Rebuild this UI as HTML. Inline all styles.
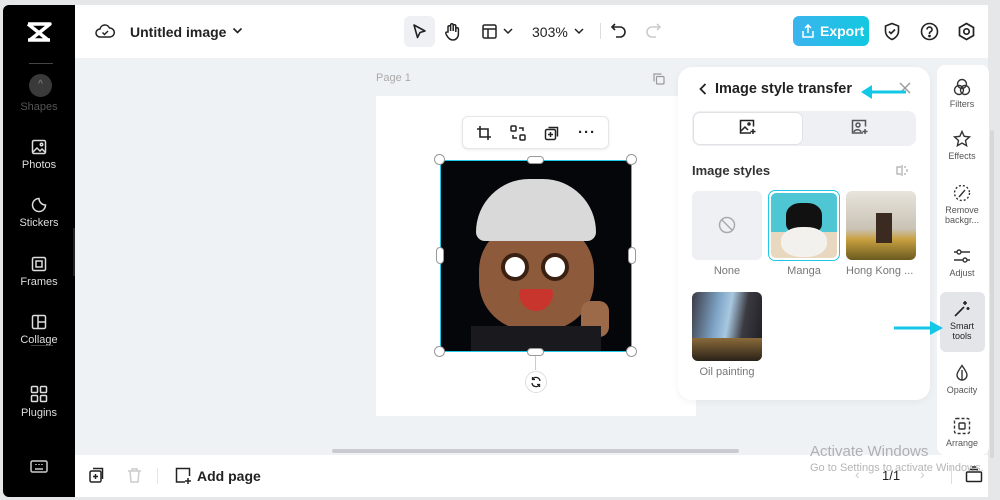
<!DOCTYPE html>
<html><head><meta charset="utf-8"><style>
*{box-sizing:border-box;margin:0;padding:0}
body{width:1000px;height:500px;background:#e6e7e9;font-family:"Liberation Sans",sans-serif;position:relative;overflow:hidden}
.a{position:absolute}
.side{left:3px;top:5px;width:72px;height:492px;background:#000;border-radius:6px 0 0 6px}
.si{position:absolute;left:0;width:72px;text-align:center;color:#ddd;font-size:11px}
.si svg{display:block;margin:0 auto 4px}
.rl{position:absolute;left:937px;width:50px;text-align:center;font-size:9px;color:#555;line-height:10px}
.rl svg{display:block;margin:0 auto 3px}
</style></head><body>
<div class="a side">
 <div class="a" style="left:23px;top:16px;width:26px;height:22px">
  <svg width="26" height="22" viewBox="0 0 26 22"><path d="M2 3h22L4 19h20M2 19h6M18 3h6M2 3l20 16" stroke="#fff" stroke-width="3.5" fill="none" stroke-linejoin="round"/></svg></div>
 <div class="a" style="left:26px;top:58px;width:24px;height:1px;background:#444"></div>
 <div class="a" style="left:26px;top:69px;width:23px;height:23px;border-radius:50%;background:#3a3a3a;color:#888;font-size:10px;text-align:center;line-height:22px">^</div>
 <div class="si" style="top:96px;color:#555">Shapes</div>
 <div class="si" style="top:134px"><svg width="16" height="16" viewBox="0 0 16 16" fill="none" stroke="#ddd" stroke-width="1.5"><rect x="1.5" y="1.5" width="13" height="13" rx="1.5"/><path d="M2 13l4-4 3 3 2-2 3 3"/><circle cx="10.5" cy="5.5" r="1.2"/></svg>Photos</div>
 <div class="si" style="top:192px"><svg width="16" height="16" viewBox="0 0 16 16" fill="none" stroke="#ddd" stroke-width="1.5"><path d="M14.5 8A6.5 6.5 0 1 1 8 1.5c0 3.5 3 6.5 6.5 6.5z"/></svg>Stickers</div>
 <div class="si" style="top:251px"><svg width="16" height="16" viewBox="0 0 16 16" fill="none" stroke="#ddd" stroke-width="1.5"><rect x="1.5" y="1.5" width="13" height="13" rx="1.5"/><rect x="5" y="5" width="6" height="6"/></svg>Frames</div>
 <div class="si" style="top:309px"><svg width="16" height="16" viewBox="0 0 16 16" fill="none" stroke="#ddd" stroke-width="1.5"><rect x="1.5" y="1.5" width="13" height="13" rx="1.5"/><path d="M7 1.5v13M7 8h7.5"/></svg>Collage</div>
 <div class="a" style="left:28px;top:340px;width:22px;height:1px;background:#444"></div>
 <div class="si" style="top:380px"><svg width="18" height="18" viewBox="0 0 18 18" fill="none" stroke="#ddd" stroke-width="1.5"><rect x="1.5" y="1.5" width="6" height="6" rx="1"/><rect x="10.5" y="1.5" width="6" height="6" rx="1"/><rect x="1.5" y="10.5" width="6" height="6" rx="1"/><rect x="10.5" y="10.5" width="6" height="6" rx="1"/></svg>Plugins</div>
 <div class="si" style="top:455px"><svg width="18" height="14" viewBox="0 0 18 14" fill="none" stroke="#ccc" stroke-width="1.5"><rect x="1" y="1" width="16" height="11" rx="1.5"/><path d="M5 9h8M6 4v1M9 4v1M12 4v1"/></svg></div>
</div>
<div class="a" style="left:73px;top:228px;width:8px;height:48px;background:#222;border-radius:0 6px 6px 0"></div>
<!-- top bar -->
<div class="a" style="left:75px;top:5px;width:913px;height:53px;background:#fff"></div>
<svg class="a" style="left:95px;top:22px" width="20" height="18" viewBox="0 0 20 18" fill="none" stroke="#222" stroke-width="1.5"><path d="M5 15a4 4 0 0 1 0-8 5 5 0 0 1 9.5-1A4.5 4.5 0 0 1 15 15z"/><path d="M7.5 10.5l2 2 3.5-3.5"/></svg>
<div class="a" style="left:130px;top:24px;font-size:14px;font-weight:bold;color:#222">Untitled image</div>
<svg class="a" style="left:232px;top:27px" width="11" height="8" viewBox="0 0 11 8"><path d="M1.5 1.5l4 4 4-4" stroke="#222" stroke-width="1.6" fill="none"/></svg>
<div class="a" style="left:404px;top:16px;width:31px;height:31px;background:#eef0f3;border-radius:6px"></div>
<svg class="a" style="left:411px;top:23px" width="17" height="17" viewBox="0 0 17 17"><path d="M3 2l11 6-5 1.5-2.5 5z" stroke="#222" stroke-width="1.6" fill="none" stroke-linejoin="round"/></svg>
<svg class="a" style="left:444px;top:22px" width="17" height="19" viewBox="0 0 17 19" fill="none" stroke="#222" stroke-width="1.5"><path d="M4 10V5a1.3 1.3 0 0 1 2.6 0v4V3a1.3 1.3 0 0 1 2.6 0v6V4a1.3 1.3 0 0 1 2.6 0v6-3a1.3 1.3 0 0 1 2.6 0v5c0 3.5-2.5 6-5.5 6S4 16 2.5 13 2 10 4 10z"/></svg>
<svg class="a" style="left:482px;top:24px" width="15" height="15" viewBox="0 0 15 15" fill="none" stroke="#222" stroke-width="1.5"><rect x="1" y="1" width="13" height="13" rx="1.5"/><path d="M1 5h13M6 5v9"/></svg>
<svg class="a" style="left:503px;top:28px" width="10" height="7" viewBox="0 0 10 7"><path d="M1 1l4 4 4-4" stroke="#222" stroke-width="1.5" fill="none"/></svg>
<div class="a" style="left:532px;top:24px;font-size:14px;color:#222">303%</div>
<svg class="a" style="left:574px;top:28px" width="10" height="7" viewBox="0 0 10 7"><path d="M1 1l4 4 4-4" stroke="#222" stroke-width="1.5" fill="none"/></svg>
<div class="a" style="left:600px;top:23px;width:1px;height:16px;background:#ddd"></div>
<svg class="a" style="left:611px;top:23px" width="16" height="15" viewBox="0 0 16 15" fill="none" stroke="#222" stroke-width="1.6"><path d="M4 1L1 4l3 3M1 4h8a5 5 0 0 1 0 10H5"/></svg>
<svg class="a" style="left:645px;top:23px" width="16" height="15" viewBox="0 0 16 15" fill="none" stroke="#ccc" stroke-width="1.6"><path d="M12 1l3 3-3 3M15 4H7a5 5 0 0 0 0 10h4"/></svg>
<div class="a" style="left:793px;top:16px;width:76px;height:30px;background:linear-gradient(90deg,#3bb4ee,#12c8e0);border-radius:6px;color:#fff;font-size:14px;font-weight:bold;line-height:30px;padding-left:27px">Export</div>
<svg class="a" style="left:801px;top:24px" width="14" height="14" viewBox="0 0 14 14" fill="none" stroke="#fff" stroke-width="1.5"><path d="M7 9V1M4 4l3-3 3 3M2 7v6h10V7"/></svg>
<svg class="a" style="left:883px;top:22px" width="18" height="19" viewBox="0 0 18 19" fill="none" stroke="#222" stroke-width="1.6"><path d="M9 1.5l6.5 2.5v5c0 4-3 7-6.5 8.5C5.5 16 2.5 13 2.5 9V4z"/><path d="M6 9.5l2 2 4-4"/></svg>
<svg class="a" style="left:920px;top:22px" width="19" height="19" viewBox="0 0 19 19" fill="none" stroke="#222" stroke-width="1.6"><circle cx="9.5" cy="9.5" r="8"/><path d="M7 7.5a2.5 2.5 0 1 1 3.5 2.3c-.7.3-1 .8-1 1.5v.7"/><circle cx="9.5" cy="14" r=".6" fill="#222"/></svg>
<svg class="a" style="left:957px;top:22px" width="19" height="19" viewBox="0 0 19 19" fill="none" stroke="#222" stroke-width="1.7"><path d="M9.5 1.5l7 4v8l-7 4-7-4v-8z"/><circle cx="9.5" cy="9.5" r="2.7"/></svg>
<!-- canvas -->
<div class="a" style="left:75px;top:58px;width:913px;height:397px;background:#eff2f5"></div>
<div class="a" style="left:376px;top:72px;font-size:11px;color:#aaa">Page 1</div>
<svg class="a" style="left:653px;top:73px" width="12" height="12" viewBox="0 0 12 12" fill="none" stroke="#999" stroke-width="1.2"><rect x="3.5" y="3.5" width="7.5" height="7.5" rx="1"/><path d="M1 8.5V1h7.5"/></svg>
<div class="a" style="left:376px;top:96px;width:320px;height:320px;background:#fff"></div>
<div class="a" style="left:462px;top:116px;width:147px;height:33px;background:#fff;border:1px solid #e4e6ea;border-radius:6px;box-shadow:0 1px 3px rgba(0,0,0,.08)"></div>
<svg class="a" style="left:476px;top:125px" width="16" height="16" viewBox="0 0 16 16" fill="none" stroke="#222" stroke-width="1.6"><path d="M4 1v11h11M1 4h11v11"/></svg>
<svg class="a" style="left:510px;top:125px" width="16" height="16" viewBox="0 0 16 16" fill="none" stroke="#222" stroke-width="1.5"><rect x="1" y="1" width="5" height="5" rx="1"/><rect x="10" y="10" width="5" height="5" rx="1"/><path d="M9 3h4v3M7 13H3v-3"/></svg>
<svg class="a" style="left:544px;top:125px" width="16" height="16" viewBox="0 0 16 16" fill="none" stroke="#222" stroke-width="1.5"><rect x="1.5" y="4.5" width="10" height="10" rx="1.5"/><path d="M4.5 2.5h9v9M6.5 7v5M4 9.5h5"/></svg>
<div class="a" style="left:578px;top:124px;font-size:15px;font-weight:bold;color:#222;letter-spacing:1px">···</div>
<!-- image -->
<div class="a" style="left:440px;top:160px;width:192px;height:192px;background:#05060a;border:1.5px solid #1ec8e6;overflow:hidden">
 <div class="a" style="left:38px;top:60px;width:115px;height:110px;border-radius:45%;background:#8d5a3c"></div>
 <div class="a" style="left:35px;top:18px;width:120px;height:62px;border-radius:60px 60px 10px 10px;background:#d9d9d9"></div>
 <div class="a" style="left:60px;top:92px;width:28px;height:28px;border-radius:50%;background:#fff;border:4px solid #3a2010"></div>
 <div class="a" style="left:100px;top:92px;width:28px;height:28px;border-radius:50%;background:#fff;border:4px solid #3a2010"></div>
 <div class="a" style="left:78px;top:128px;width:34px;height:22px;border-radius:4px 4px 20px 20px;background:#c8352d"></div>
 <div class="a" style="left:140px;top:140px;width:28px;height:36px;border-radius:10px;background:#9c6a48"></div>
 <div class="a" style="left:30px;top:165px;width:130px;height:30px;background:#1a1a1e"></div>
</div>
<div class="a" style="left:434px;top:154px;width:11px;height:11px;border-radius:50%;background:#fff;border:1px solid #999"></div>
<div class="a" style="left:626px;top:154px;width:11px;height:11px;border-radius:50%;background:#fff;border:1px solid #999"></div>
<div class="a" style="left:434px;top:346px;width:11px;height:11px;border-radius:50%;background:#fff;border:1px solid #999"></div>
<div class="a" style="left:626px;top:346px;width:11px;height:11px;border-radius:50%;background:#fff;border:1px solid #999"></div>
<div class="a" style="left:527px;top:156px;width:17px;height:8px;border-radius:4px;background:#fff;border:1px solid #999"></div>
<div class="a" style="left:527px;top:348px;width:17px;height:8px;border-radius:4px;background:#fff;border:1px solid #999"></div>
<div class="a" style="left:436px;top:247px;width:8px;height:17px;border-radius:4px;background:#fff;border:1px solid #999"></div>
<div class="a" style="left:628px;top:247px;width:8px;height:17px;border-radius:4px;background:#fff;border:1px solid #999"></div>
<div class="a" style="left:535px;top:356px;width:1px;height:14px;background:#ccc"></div>
<div class="a" style="left:525px;top:371px;width:22px;height:22px;border-radius:50%;background:#fff;border:1px solid #ddd"></div>
<svg class="a" style="left:530px;top:376px" width="12" height="12" viewBox="0 0 12 12" fill="none" stroke="#222" stroke-width="1.3"><path d="M10 5a4 4 0 0 0-7.5-1.5M2 7a4 4 0 0 0 7.5 1.5M2.5 1v2.5H5M9.5 11V8.5H7"/></svg>
<div class="a" style="left:332px;top:449px;width:407px;height:4px;border-radius:2px;background:#c8cbcf"></div>
<!-- panel -->
<div class="a" style="left:678px;top:67px;width:252px;height:333px;background:#fff;border-radius:14px;box-shadow:0 2px 8px rgba(0,0,0,.05)"></div>
<svg class="a" style="left:698px;top:82px" width="10" height="14" viewBox="0 0 10 14"><path d="M7.5 2L2.5 7l5 5" stroke="#222" stroke-width="1.8" fill="none"/></svg>
<div class="a" style="left:715px;top:81px;font-size:14.5px;font-weight:bold;color:#222">Image style transfer</div>
<svg class="a" style="left:898px;top:81px" width="14" height="14" viewBox="0 0 14 14"><path d="M2 2l10 10M12 2L2 12" stroke="#999" stroke-width="1.4"/></svg>
<svg class="a" style="left:860px;top:84px" width="48" height="16" viewBox="0 0 48 16"><path d="M10 8h36" stroke="#12c8e6" stroke-width="3"/><path d="M1 8l11-7v14z" fill="#12c8e6"/></svg>
<div class="a" style="left:692px;top:111px;width:224px;height:35px;background:#eef0f3;border-radius:8px"></div>
<div class="a" style="left:693px;top:112px;width:110px;height:33px;background:#fff;border-radius:7px;border:1px solid #e0e2e6"></div>
<svg class="a" style="left:739px;top:119px" width="18" height="16" viewBox="0 0 18 16" fill="none" stroke="#222" stroke-width="1.5"><path d="M12 14H1.5V1.5h13v6"/><path d="M2 12l4-4 3 3"/><circle cx="10" cy="5" r="1"/><path d="M14 10v5M11.5 12.5h5"/></svg>
<svg class="a" style="left:851px;top:119px" width="18" height="16" viewBox="0 0 18 16" fill="none" stroke="#555" stroke-width="1.5"><path d="M12 14H1.5V1.5h13v6"/><circle cx="7" cy="6" r="2"/><path d="M3 13c1-3 6-3 7 0M14 10v5M11.5 12.5h5"/></svg>
<div class="a" style="left:692px;top:163px;font-size:13px;font-weight:bold;color:#333">Image styles</div>
<svg class="a" style="left:895px;top:164px" width="14" height="13" viewBox="0 0 14 13" fill="none" stroke="#aaa" stroke-width="1.2"><path d="M7 1v11M6 3H2v7h4M9 3h2M12 5v3M9 10h2"/></svg>
<div class="a" style="left:692px;top:191px;width:70px;height:69px;background:#eef0f3;border-radius:6px"></div>
<svg class="a" style="left:718px;top:216px" width="18" height="18" viewBox="0 0 18 18" fill="none" stroke="#aaa" stroke-width="1.5"><circle cx="9" cy="9" r="7.5"/><path d="M4 4l10 10"/></svg>
<div class="a" style="left:692px;top:265px;width:70px;text-align:center;font-size:11px;color:#777">None</div>
<div class="a" style="left:768px;top:190px;width:72px;height:71px;border:1.5px solid #1ec8e6;border-radius:7px;padding:2px;background:#fff"><div style="width:100%;height:100%;border-radius:5px;background:linear-gradient(#4fc6d4 0,#4fc6d4 60%,#e8d8c0 60%);position:relative;overflow:hidden"><div class="a" style="left:15px;top:10px;width:36px;height:30px;background:#111;border-radius:40% 40% 30% 30%"></div><div class="a" style="left:10px;top:34px;width:46px;height:30px;background:#f3f1ee;border-radius:45%"></div></div></div>
<div class="a" style="left:768px;top:265px;width:72px;text-align:center;font-size:11px;color:#777">Manga</div>
<div class="a" style="left:846px;top:191px;width:70px;height:69px;border-radius:6px;background:linear-gradient(#e8e4dc 0,#c9c2b5 55%,#c9a040 70%,#6a5a20 100%);overflow:hidden"><div class="a" style="left:30px;top:22px;width:16px;height:30px;background:#3a2a20"></div></div>
<div class="a" style="left:846px;top:265px;font-size:11px;color:#777">Hong Kong ...</div>
<div class="a" style="left:692px;top:292px;width:70px;height:69px;border-radius:6px;background:linear-gradient(100deg,#3a3a44 0,#7fa6c8 35%,#a8c8e0 50%,#3b3a40 70%,#1c1c22 100%);overflow:hidden"><div class="a" style="left:0;top:46px;width:70px;height:23px;background:linear-gradient(#8a6a3a,#2a2218)"></div></div>
<div class="a" style="left:692px;top:366px;width:70px;text-align:center;font-size:11px;color:#777">Oil painting</div>
<!-- right rail -->
<div class="a" style="left:937px;top:65px;width:52px;height:390px;background:#fff;border-radius:8px"></div>
<div class="a" style="left:990px;top:130px;width:4px;height:328px;background:#d8d8d8;border-radius:2px"></div>
<div class="rl" style="top:78px"><svg width="18" height="18" viewBox="0 0 18 18" fill="none" stroke="#333" stroke-width="1.4"><circle cx="9" cy="6" r="4.5"/><circle cx="6" cy="12" r="4.5"/><circle cx="12" cy="12" r="4.5"/></svg>Filters</div>
<div class="rl" style="top:130px"><svg width="18" height="18" viewBox="0 0 18 18" fill="none" stroke="#333" stroke-width="1.4"><path d="M9 1.5l2.2 4.8 5.3.6-4 3.6 1.1 5.2L9 13l-4.6 2.7 1.1-5.2-4-3.6 5.3-.6z"/></svg>Effects</div>
<div class="rl" style="top:184px"><svg width="18" height="18" viewBox="0 0 18 18" fill="none" stroke="#333" stroke-width="1.4"><circle cx="9" cy="9" r="7.5" stroke-dasharray="2 2"/><path d="M6 13l6-7"/></svg>Remove<br>backgr...</div>
<div class="rl" style="top:247px"><svg width="18" height="18" viewBox="0 0 18 18" fill="none" stroke="#333" stroke-width="1.4"><path d="M1 5h16M1 13h16"/><circle cx="6" cy="5" r="2" fill="#fff"/><circle cx="12" cy="13" r="2" fill="#fff"/></svg>Adjust</div>
<div class="a" style="left:940px;top:292px;width:45px;height:60px;background:#e3e5e8;border-radius:6px"></div>
<div class="rl" style="top:300px;color:#222"><svg width="18" height="18" viewBox="0 0 18 18" fill="none" stroke="#222" stroke-width="1.6"><path d="M2 16l9-9"/><path d="M12 1v4M10 3h4M15 7v3M13.5 8.5h3"/></svg>Smart<br>tools</div>
<svg class="a" style="left:894px;top:320px" width="50" height="16" viewBox="0 0 50 16"><path d="M0 8h38" stroke="#12c8e6" stroke-width="3"/><path d="M49 8L36 1v14z" fill="#12c8e6"/></svg>
<div class="rl" style="top:364px"><svg width="18" height="18" viewBox="0 0 18 18" fill="none" stroke="#333" stroke-width="1.4"><path d="M9 1.5C6 6 4 8.5 4 11a5 5 0 0 0 10 0C14 8.5 12 6 9 1.5z"/><path d="M9 6v10"/></svg>Opacity</div>
<div class="rl" style="top:417px"><svg width="18" height="18" viewBox="0 0 18 18" fill="none" stroke="#333" stroke-width="1.4"><rect x="1.5" y="1.5" width="15" height="15" rx="2" stroke-dasharray="3 2"/><rect x="6" y="6" width="6" height="6" rx="1"/></svg>Arrange</div>
<!-- bottom bar -->
<div class="a" style="left:75px;top:455px;width:913px;height:42px;background:#fff"></div>
<svg class="a" style="left:89px;top:467px" width="16" height="17" viewBox="0 0 16 17" fill="none" stroke="#222" stroke-width="1.5"><rect x="1" y="4" width="11" height="11" rx="1.5"/><path d="M4 1.5h9.5V12M6.5 7v5M4 9.5h5"/></svg>
<svg class="a" style="left:127px;top:467px" width="15" height="17" viewBox="0 0 15 17" fill="none" stroke="#ccc" stroke-width="1.5"><path d="M1 4h13M5 4V2h5v2M3 4l1 11h7l1-11"/></svg>
<div class="a" style="left:157px;top:468px;width:1px;height:16px;background:#e5e5e5"></div>
<svg class="a" style="left:175px;top:467px" width="17" height="17" viewBox="0 0 17 17" fill="none" stroke="#222" stroke-width="1.5"><path d="M10 15H1.5V1.5h13V9M13 11v6M10 14h6"/></svg>
<div class="a" style="left:197px;top:468px;font-size:14px;font-weight:bold;color:#222">Add page</div>
<div class="a" style="left:855px;top:466px;font-size:14px;color:#ccc">‹</div>
<div class="a" style="left:882px;top:468px;font-size:13px;color:#222">1/1</div>
<div class="a" style="left:920px;top:466px;font-size:14px;color:#ccc">›</div>
<div class="a" style="left:951px;top:466px;width:1px;height:18px;background:#ddd"></div>
<svg class="a" style="left:965px;top:466px" width="18" height="17" viewBox="0 0 18 17" fill="none" stroke="#222" stroke-width="1.5"><rect x="1.5" y="6" width="15" height="9.5" rx="1"/><path d="M5 3.5h8M7 1h4"/></svg>
<div class="a" style="left:810px;top:443px;font-size:15px;color:rgba(120,120,120,.55)">Activate Windows</div>
<div class="a" style="left:810px;top:462px;font-size:11px;color:rgba(120,120,120,.55)">Go to Settings to activate Windows.</div>
</body></html>
